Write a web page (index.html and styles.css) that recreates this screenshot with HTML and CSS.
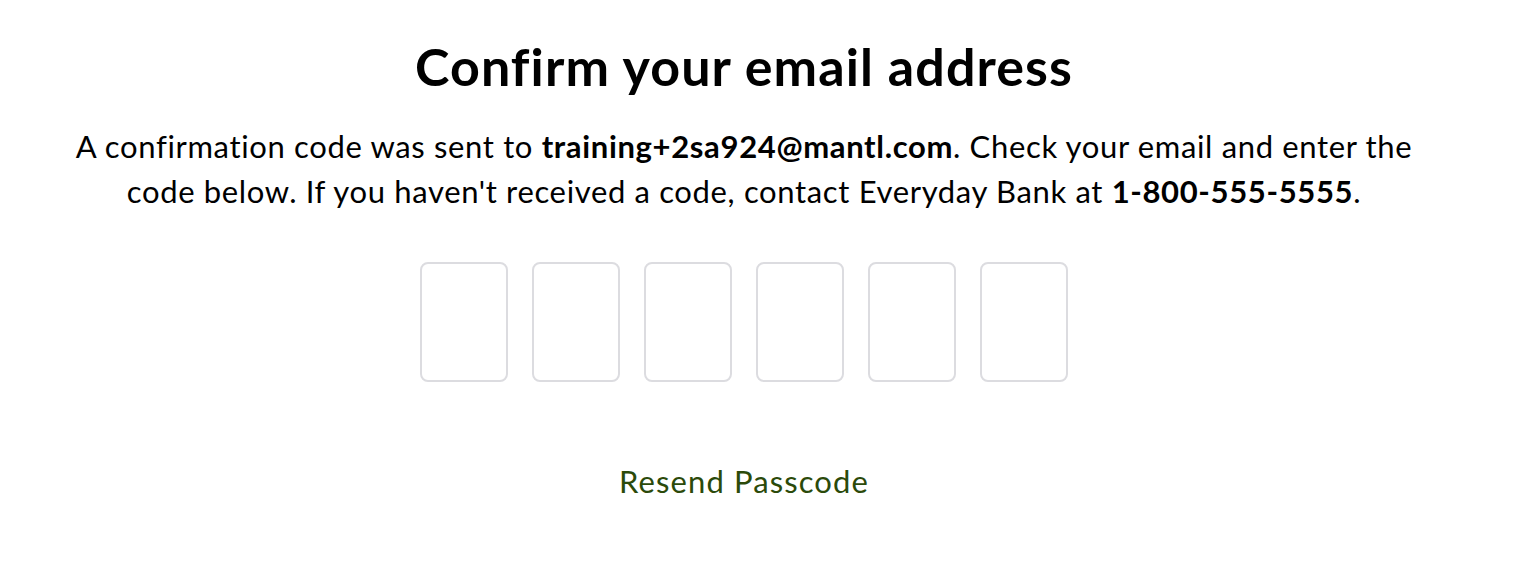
FILE: index.html
```html
<!DOCTYPE html>
<html lang="en">
<head>
  <meta charset="UTF-8">
  <title>Confirm your email address</title>
  <link rel="stylesheet" href="styles.css">
</head>
<body>
  <main class="confirm">
    <h1 class="confirm-title">Confirm your email address</h1>
    <p class="confirm-text">
      A confirmation code was sent to <strong>training+2sa924@mantl.com</strong>. Check your email and enter the
      code below. If you haven't received a code, contact Everyday Bank at <strong>1-800-555-5555</strong>.
    </p>

    <form class="code-form">
      <div class="code-inputs">
        <input class="code-box" type="text" maxlength="1" inputmode="numeric">
        <input class="code-box" type="text" maxlength="1" inputmode="numeric">
        <input class="code-box" type="text" maxlength="1" inputmode="numeric">
        <input class="code-box" type="text" maxlength="1" inputmode="numeric">
        <input class="code-box" type="text" maxlength="1" inputmode="numeric">
        <input class="code-box" type="text" maxlength="1" inputmode="numeric">
      </div>
      <a class="resend" href="#">Resend Passcode</a>
    </form>
  </main>
</body>
</html>
```

FILE: styles.css
```css
body {
  margin: 0;
  background: #fff;
  color: #000;
  font-family: Lato, "Noto Sans", sans-serif;
  font-variant-ligatures: none;
}

.confirm {
  display: flex;
  flex-direction: column;
  align-items: center;
  padding: 32px 42px 0 0;
  text-align: center;
}

.confirm-title {
  margin: 0;
  font-size: 52px;
  font-weight: 700;
  line-height: 68px;
  letter-spacing: 1.1px;
}

.confirm-text {
  margin: 24px 0 0;
  max-width: 1370px;
  font-size: 31px;
  line-height: 45px;
  letter-spacing: 0.65px;
}

.confirm-text strong {
  font-weight: 700;
}

.code-form {
  display: flex;
  flex-direction: column;
  align-items: center;
}

.code-inputs {
  display: flex;
  gap: 24px;
  margin-top: 48px;
}

.code-box {
  box-sizing: border-box;
  width: 88px;
  height: 120px;
  border: 2px solid #dcdce0;
  border-radius: 8px;
  background: #fff;
  font-family: inherit;
  font-size: 40px;
  text-align: center;
  outline: none;
}

.resend {
  margin-top: 81px;
  color: #2b4a0a;
  font-size: 31px;
  line-height: 1.2;
  text-decoration: none;
  letter-spacing: 1.1px;
}
```
